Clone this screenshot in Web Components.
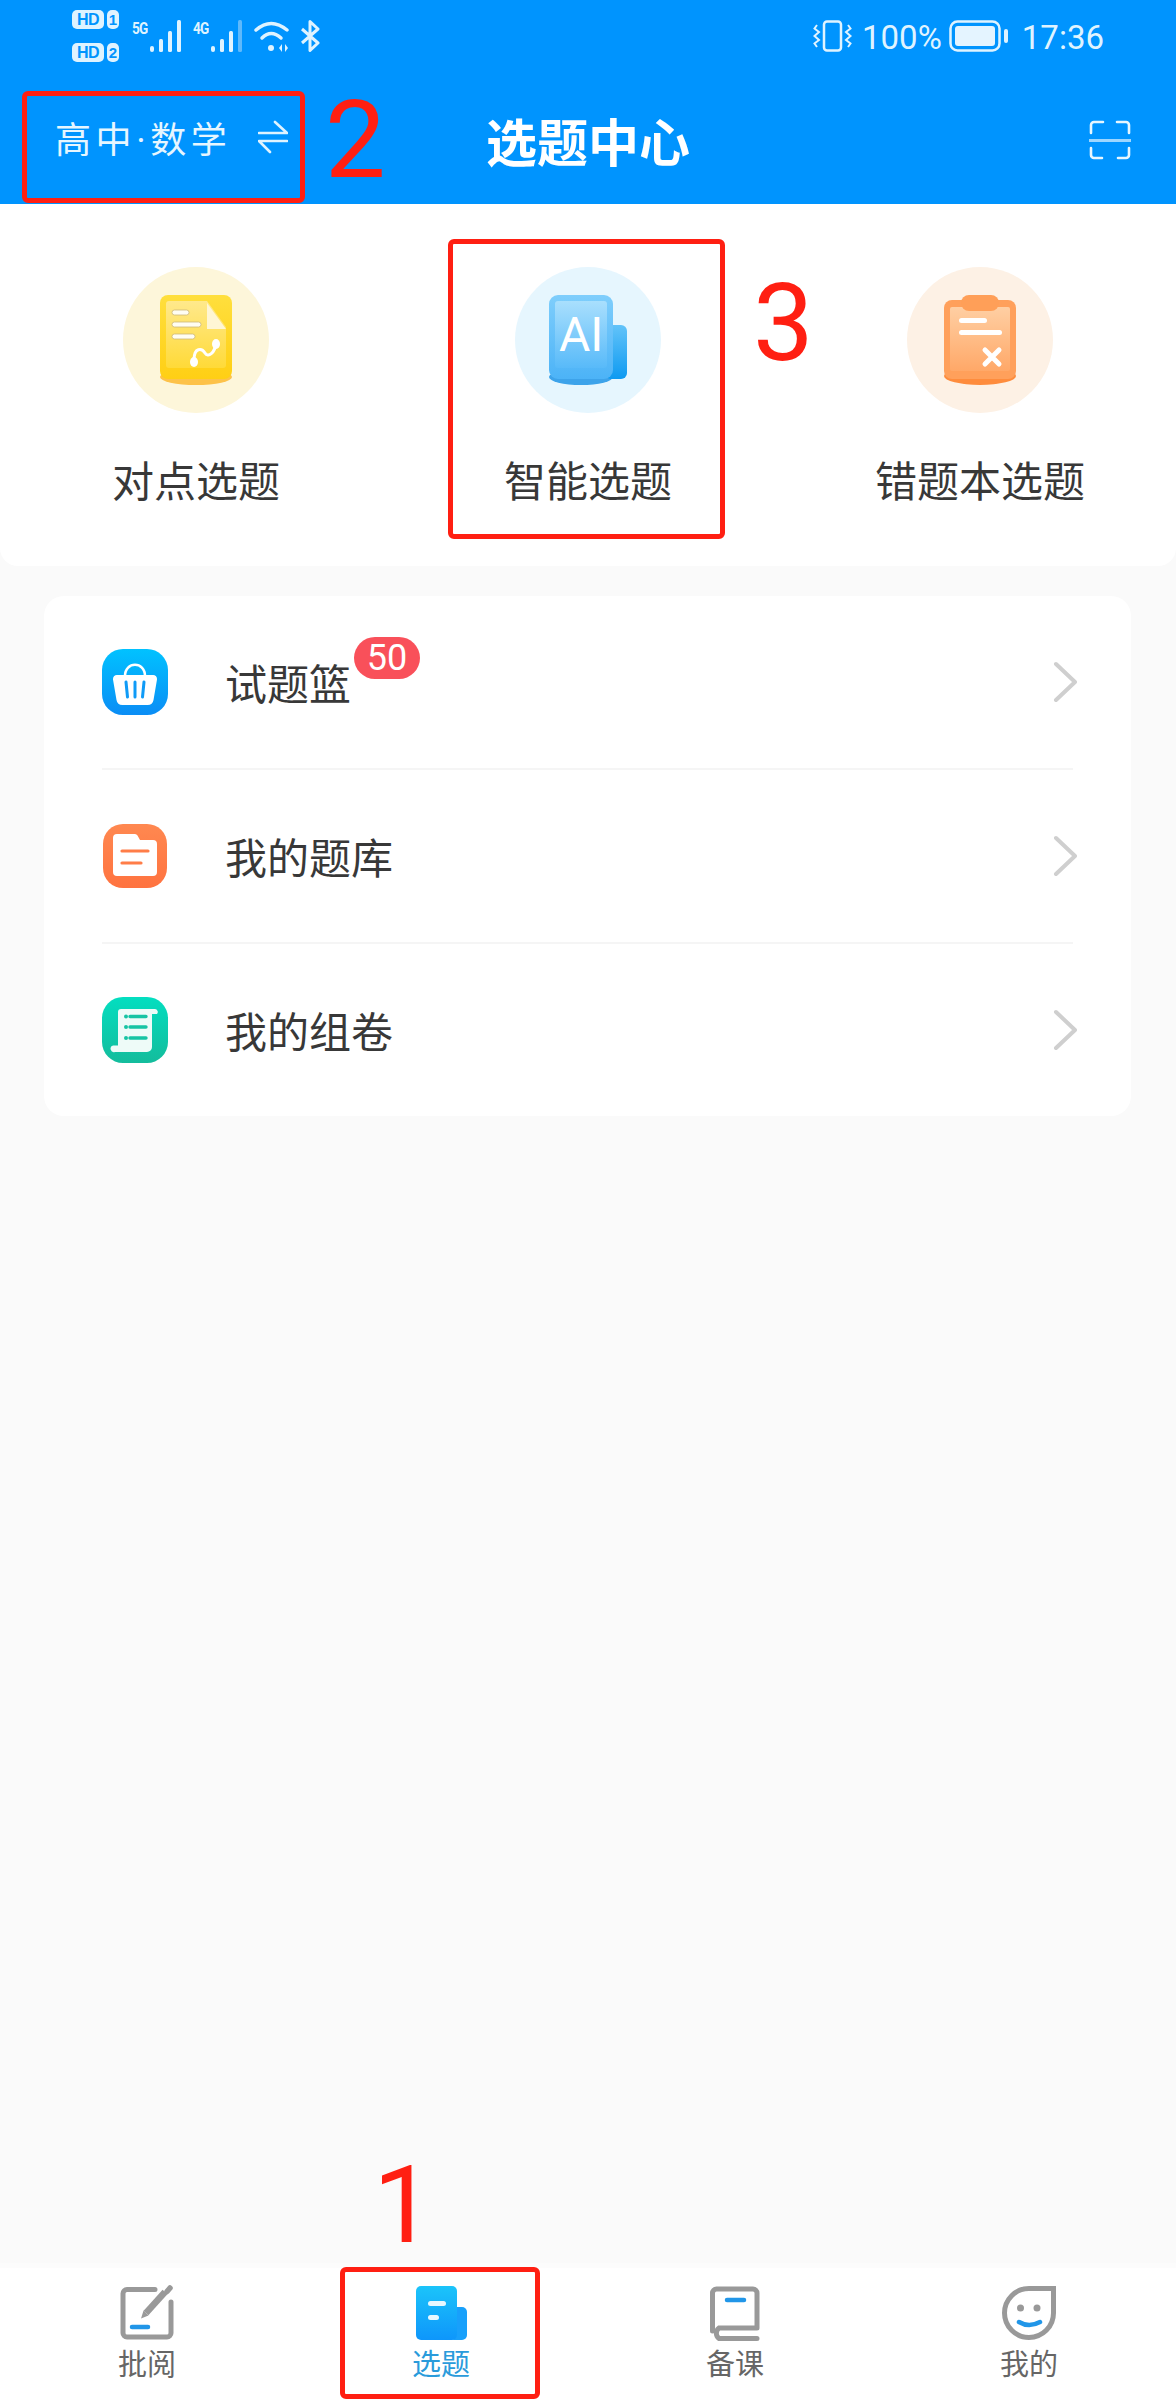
<!DOCTYPE html>
<html lang="zh">
<head>
<meta charset="utf-8">
<title>选题中心</title>
<style>
  html, body { margin: 0; padding: 0; background: #fafafa; }
  body { font-family: "Noto Sans CJK SC", "Noto Sans", sans-serif; }
</style>
</head>
<body>
<app-screen>
  <status-bar></status-bar>
  <top-nav subject="高中·数学" heading="选题中心"></top-nav>

  <entry-card>
    <entry-item label="对点选题" tint="#fdf6da">
      <svg slot="icon" width="72" height="90" viewBox="0 0 72 90">
        <defs>
          <linearGradient id="yo" x1="0" y1="0" x2="0" y2="1"><stop offset="0" stop-color="#ffdf3d"/><stop offset="1" stop-color="#ffcf14"/></linearGradient>
          <linearGradient id="yi" x1="0" y1="0" x2="0" y2="1"><stop offset="0" stop-color="#ffe98c"/><stop offset="1" stop-color="#ffda38"/></linearGradient>
        </defs>
        <ellipse cx="36" cy="82" rx="36" ry="8" fill="#fdc24a"/>
        <rect x="0" y="0" width="72" height="84" rx="8" fill="url(#yo)"/>
        <path d="M9 6H47L66 32V70a3 3 0 0 1-3 3H9a3 3 0 0 1-3-3V9a3 3 0 0 1 3-3z" fill="url(#yi)"/>
        <path d="M47 8L66 34H47z" fill="#fff6d4"/>
        <g fill="#fffdf2" stroke="#cdb87a" stroke-width=".8">
          <rect x="12" y="15" width="17" height="5" rx="2.5"/>
          <rect x="12" y="27" width="29" height="5" rx="2.5"/>
          <rect x="12" y="39" width="23" height="5" rx="2.5"/>
        </g>
        <path d="M34 65C34 52 42 53 45 58S55 58 56 48" fill="none" stroke="#fff" stroke-width="3"/>
        <ellipse cx="34" cy="67" rx="4" ry="5" fill="#fff"/>
        <ellipse cx="56" cy="49" rx="4" ry="5" fill="#fff"/>
      </svg>
    </entry-item>
    <entry-item label="智能选题" tint="#e6f6fe">
      <svg slot="icon" width="78" height="90" viewBox="0 0 78 90">
        <defs>
          <linearGradient id="bt" x1="0" y1="0" x2="0" y2="1"><stop offset="0" stop-color="#62c3f9"/><stop offset="1" stop-color="#0e9af1"/></linearGradient>
          <linearGradient id="bo" x1="0" y1="0" x2="0" y2="1"><stop offset="0" stop-color="#7fcefc"/><stop offset="1" stop-color="#4cb3f7"/></linearGradient>
          <linearGradient id="bi" x1="0" y1="0" x2="0" y2="1"><stop offset="0" stop-color="#a9dffd"/><stop offset="1" stop-color="#58baf9"/></linearGradient>
        </defs>
        <ellipse cx="32" cy="82" rx="32" ry="8" fill="#3da3ea"/>
        <rect x="56" y="30" width="22" height="54" rx="6" fill="url(#bt)"/>
        <rect x="0" y="0" width="64" height="84" rx="9" fill="url(#bo)"/>
        <rect x="6" y="6" width="52" height="67" rx="3" fill="url(#bi)"/>
        <text x="10" y="56" font-family="Roboto, sans-serif" font-size="48" font-weight="400" fill="#fff">AI</text>
      </svg>
    </entry-item>
    <entry-item label="错题本选题" tint="#fdf1e5">
      <svg slot="icon" width="72" height="90" viewBox="0 0 72 90">
        <defs>
          <linearGradient id="oi" x1="0" y1="0" x2="0" y2="1"><stop offset="0" stop-color="#ffcfa3"/><stop offset="1" stop-color="#ffa868"/></linearGradient>
        </defs>
        <ellipse cx="36" cy="81" rx="36" ry="9" fill="#fe8c3d"/>
        <rect x="0" y="5" width="72" height="79" rx="8" fill="#ffa05b"/>
        <rect x="6" y="12" width="60" height="64" rx="2" fill="url(#oi)"/>
        <rect x="17" y="0" width="38" height="16" rx="8" fill="#ff9f58"/>
        <rect x="15" y="23" width="28" height="5" rx="2.5" fill="#fff"/>
        <rect x="15" y="35" width="43" height="5" rx="2.5" fill="#fff"/>
        <path d="M41 55L55 69M55 55L41 69" stroke="#fff" stroke-width="5" stroke-linecap="round"/>
      </svg>
    </entry-item>
  </entry-card>

  <menu-card>
    <menu-row label="试题篮" badge="50">
      <svg slot="icon" width="66" height="66" viewBox="0 0 66 66">
        <defs><linearGradient id="m1" x1="0" y1="0" x2="0" y2="1"><stop offset="0" stop-color="#01c2ff"/><stop offset="1" stop-color="#0b8df5"/></linearGradient></defs>
        <rect width="66" height="66" rx="21" fill="url(#m1)"/>
        <path d="M23 27C23 12 43 12 43 27" fill="none" stroke="#fff" stroke-width="2.6"/>
        <path d="M15 26H51a4 4 0 0 1 4 4.500L51.500 51a6 6 0 0 1-6 5H20.500a6 6 0 0 1-6-5L11 30.500A4 4 0 0 1 15 26z" fill="#fff"/>
        <path d="M24 33L25.500 48M33 33V48M42 33L40.500 48" stroke="#0f9bf7" stroke-width="3" stroke-linecap="round"/>
      </svg>
    </menu-row>
    <menu-row label="我的题库">
      <svg slot="icon" width="64" height="64" viewBox="0 0 64 64">
        <defs><linearGradient id="m2" x1="0" y1="0" x2="0" y2="1"><stop offset="0" stop-color="#ff8850"/><stop offset="1" stop-color="#ff7340"/></linearGradient></defs>
        <rect width="64" height="64" rx="20" fill="url(#m2)"/>
        <path d="M14 10H32a3 3 0 0 1 2.500 1.500L37 16H50a4 4 0 0 1 4 4V48a4 4 0 0 1-4 4H14a4 4 0 0 1-4-4V14a4 4 0 0 1 4-4z" fill="#fff"/>
        <path d="M19 27H45M19 39H38" stroke="#ff7d48" stroke-width="3.200" stroke-linecap="round"/>
      </svg>
    </menu-row>
    <menu-row label="我的组卷" last>
      <svg slot="icon" width="66" height="66" viewBox="0 0 66 66">
        <defs><linearGradient id="m3" x1="0" y1="0" x2="0" y2="1"><stop offset="0" stop-color="#03dec0"/><stop offset="1" stop-color="#14bc9c"/></linearGradient></defs>
        <rect width="66" height="66" rx="21" fill="url(#m3)"/>
        <path d="M19 12H53a3 3 0 0 1 2 5H50V50a5 5 0 0 1-5 5H13a3 3 0 0 1-2-6.500H16V15a3 3 0 0 1 3-3z" fill="#eefbf8"/>
        <path d="M28 19.500H44M28 30H44M28 41H44" stroke="#17c4a4" stroke-width="3.400" stroke-linecap="round"/>
        <circle cx="24" cy="19.500" r="2" fill="#17c4a4"/><circle cx="24" cy="30" r="2" fill="#17c4a4"/><circle cx="24" cy="41" r="2" fill="#17c4a4"/>
      </svg>
    </menu-row>
  </menu-card>

  <tab-bar>
    <tab-item label="批阅">
      <svg slot="icon" width="56" height="56" viewBox="0 0 56 56" fill="none">
        <path d="M36 4.500H8a4 4 0 0 0-4 4V48a4 4 0 0 0 4 4H48a4 4 0 0 0 4-4V17" stroke="#999" stroke-width="5" stroke-linecap="round"/>
        <path d="M27 28L46 7" stroke="#999" stroke-width="6.500"/>
        <path d="M48 6.500L51 3" stroke="#999" stroke-width="5.500" stroke-linecap="round"/>
        <path d="M24.500 25.500L29.500 30.500L22 33.500z" fill="#999"/>
        <path d="M13 42H29" stroke="#2196e8" stroke-width="4.500" stroke-linecap="round"/>
      </svg>
    </tab-item>
    <tab-item label="选题" active>
      <svg slot="icon" width="56" height="56" viewBox="0 0 56 56">
        <defs><linearGradient id="t1" x1="0" y1="0" x2="0" y2="1"><stop offset="0" stop-color="#1bc4fa"/><stop offset="1" stop-color="#0e96fb"/></linearGradient></defs>
        <rect x="36" y="22" width="18" height="33" rx="5" fill="#18a0fb"/>
        <rect x="3" y="1" width="41" height="54" rx="5" fill="url(#t1)"/>
        <rect x="15" y="16" width="18" height="5" rx="2.500" fill="#e8f8ff"/>
        <rect x="15" y="30" width="11" height="5" rx="2.500" fill="#e8f8ff"/>
      </svg>
    </tab-item>
    <tab-item label="备课">
      <svg slot="icon" width="56" height="56" viewBox="0 0 56 56" fill="none">
        <path d="M50 43H12a6.500 6.500 0 0 0 0 10.500H50M50 43V8a4 4 0 0 0-4-4H9.500a4 4 0 0 0-4 4V46" stroke="#999" stroke-width="5" stroke-linecap="round"/>
        <path d="M20 15H37" stroke="#2196e8" stroke-width="4.500" stroke-linecap="round"/>
      </svg>
    </tab-item>
    <tab-item label="我的">
      <svg slot="icon" width="56" height="56" viewBox="0 0 56 56" fill="none">
        <path d="M52.500 3.500H28A24.500 24.500 0 1 0 52.500 28z" stroke="#999" stroke-width="5"/>
        <circle cx="19.500" cy="23" r="3.500" fill="#999"/><circle cx="36" cy="23" r="3.500" fill="#999"/>
        <path d="M18 37Q28 43 39 37" stroke="#2196e8" stroke-width="4.500" stroke-linecap="round"/>
      </svg>
    </tab-item>
  </tab-bar>

  <!-- red annotations drawn over the screenshot -->
  <red-mark style="left:22px;top:91px;width:283px;height:112px"></red-mark>
  <red-mark style="left:448px;top:239px;width:277px;height:300px"></red-mark>
  <red-mark style="left:340px;top:2267px;width:200px;height:132px"></red-mark>
  <red-num style="left:325px;top:86px">2</red-num>
  <red-num style="left:753px;top:269px">3</red-num>
  <red-num style="left:373px;top:2151px">1</red-num>
</app-screen>

<script>
"use strict";

class AppScreen extends HTMLElement {
    constructor() {
        super();
        this.attachShadow({ mode: 'open' }).innerHTML = `
        <style>
          :host {
              display: flex;
              flex-direction: column;
              position: relative;
              width: 1176px;
              height: 2400px;
              overflow: hidden;
              background: #fafafa;
          }
        </style>
        <slot></slot>`;
    }
}

class StatusBar extends HTMLElement {
    constructor() {
        super();
        const bars = (last) => `
            <svg width="33" height="32" viewBox="0 0 33 32" fill="#dff3ff">
              <rect x="1" y="26" width="4" height="6" rx="2"/>
              <rect x="10" y="19" width="4" height="13" rx="1.500"/>
              <rect x="19" y="11" width="4" height="21" rx="1.500"/>
              <rect x="28" y="0" width="4" height="32" rx="1.500" fill="${last}"/>
            </svg>`;
        this.attachShadow({ mode: 'open' }).innerHTML = `
        <style>
          :host {
              display: flex;
              justify-content: space-between;
              height: 84px;
              box-sizing: border-box;
              padding: 10px 72px 0 72px;
              background: #0094fe;
              color: #dff3ff;
              font-family: Roboto, sans-serif;
          }
          .side { display: flex; align-items: flex-start; }
          svg { display: block; margin-top: 10px; }
          .hd { display: flex; flex-direction: column; gap: 14px; margin-right: 13px; }
          .hd div { display: flex; gap: 3px; }
          .hd span {
              height: 19px;
              width: 32px;
              border-radius: 5px;
              background: #dff3ff;
              color: #0094fe;
              font: bold 16px/19px "Liberation Sans", sans-serif;
              letter-spacing: -.5px;
              text-align: center;
          }
          .hd span + span { width: 12px; letter-spacing: 0; font-size: 15px; }
          .net { display: flex; align-items: flex-start; margin-right: 11px; }
          .net b {
              display: block;
              width: 17px;
              margin-top: 10px;
              font: bold 17px/17px Roboto, sans-serif;
              letter-spacing: -1px;
              transform: scaleX(.8);
              transform-origin: left;
          }
          .txt { font-size: 33px; line-height: 38px; margin-top: 9px; }
        </style>
        <div class="side">
          <div class="hd">
            <div><span>HD</span><span>1</span></div>
            <div><span>HD</span><span>2</span></div>
          </div>
          <div class="net"><b>5G</b>${bars('#dff3ff')}</div>
          <div class="net"><b>4G</b>${bars('#5fb9fb')}</div>
          <svg width="36" height="32" viewBox="0 0 36 32" fill="none" stroke="#dff3ff" stroke-linecap="round" style="margin-right:10px">
            <path d="M2 10Q17 -3 33 10" stroke-width="3.500"/>
            <path d="M8 18Q17 9 27 18" stroke-width="3.500"/>
            <circle cx="17" cy="28" r="3" fill="#dff3ff" stroke="none"/>
            <path d="M28 24L25 28L28 32zM31 24L34 28L31 32z" fill="#dff3ff" stroke="none"/>
          </svg>
          <svg width="20" height="32" viewBox="0 0 20 32" fill="none" stroke="#dff3ff" stroke-width="3" stroke-linejoin="round">
            <path d="M2 9L18 23L10 30.500V1.500L18 9L2 23"/>
          </svg>
        </div>
        <div class="side">
          <svg width="39" height="32" viewBox="0 0 39 32" fill="none" stroke="#dff3ff" stroke-width="2.500" style="margin-right:10px">
            <rect x="11" y="1.500" width="17" height="29" rx="3"/>
            <path d="M4 5L1.500 8.500L6 12L1.500 16L6 20L1.500 23.500L4 27M35 5L37.500 8.500L33 12L37.500 16L33 20L37.500 23.500L35 27" stroke-width="2"/>
          </svg>
          <div class="txt">100%</div>
          <svg width="59" height="32" viewBox="0 0 59 32" style="margin-left:7px;margin-right:14px">
            <rect x="1.500" y="1.500" width="49" height="29" rx="7" fill="none" stroke="#dff3ff" stroke-width="2.500"/>
            <rect x="6" y="6" width="40" height="20" rx="3" fill="#e4f4ff"/>
            <rect x="55" y="9" width="4" height="14" rx="2" fill="#dff3ff"/>
          </svg>
          <div class="txt">17:36</div>
        </div>`;
    }
}

class TopNav extends HTMLElement {
    constructor() {
        super();
        this.attachShadow({ mode: 'open' }).innerHTML = `
        <style>
          :host {
              display: grid;
              grid-template-columns: 1fr auto 1fr;
              align-items: center;
              height: 120px;
              box-sizing: border-box;
              padding: 0 45px 8px 45px;
              background: #0094fe;
              color: #fff;
          }
          .subject {
              display: flex;
              align-items: center;
              gap: 27px;
              margin: 0 0 6px 10px;
              font-family: Roboto, "Noto Sans CJK SC", sans-serif;
              font-size: 36px;
              letter-spacing: 4.6px;
              color: #e6f6ff;
          }
          h1 { margin: 0; font-size: 51px; line-height: 60px; font-weight: 700; }
          .scan { justify-self: end; display: block; }
          svg { display: block; }
        </style>
        <div class="subject">
          <span>${this.getAttribute('subject')}</span>
          <svg width="30" height="34" viewBox="0 0 30 34" fill="none" stroke="#dff3ff" stroke-width="2.600" stroke-linecap="round" stroke-linejoin="round">
            <path d="M1 13H29L17 2M29 21H1L12 32"/>
          </svg>
        </div>
        <h1>${this.getAttribute('heading')}</h1>
        <svg class="scan" width="42" height="40" viewBox="0 0 42 40" fill="none" stroke="#e6f6ff" stroke-width="2.600" stroke-linecap="round">
          <path d="M2 13V5a3 3 0 0 1 3-3H14M28 2H37a3 3 0 0 1 3 3V13M2 28V35a3 3 0 0 0 3 3H13M29 38H37a3 3 0 0 0 3-3V28"/>
          <path d="M0 20.500H42" stroke="#9dd6ff" stroke-width="3"/>
        </svg>`;
    }
}

class EntryCard extends HTMLElement {
    constructor() {
        super();
        this.attachShadow({ mode: 'open' }).innerHTML = `
        <style>
          :host {
              display: grid;
              grid-template-columns: repeat(3, 392px);
              height: 362px;
              box-sizing: border-box;
              padding-top: 63px;
              background: #fff;
              border-radius: 0 0 18px 18px;
          }
        </style>
        <slot></slot>`;
    }
}

class EntryItem extends HTMLElement {
    constructor() {
        super();
        this.attachShadow({ mode: 'open' }).innerHTML = `
        <style>
          :host { display: flex; flex-direction: column; align-items: center; }
          .disc {
              display: flex;
              align-items: center;
              justify-content: center;
              width: 146px;
              height: 146px;
              border-radius: 50%;
              background: ${this.getAttribute('tint')};
          }
          ::slotted(svg) { display: block; }
          .label { margin-top: 41px; font-size: 42px; line-height: 50px; color: #383838; }
        </style>
        <div class="disc"><slot name="icon"></slot></div>
        <div class="label">${this.getAttribute('label')}</div>`;
    }
}

class MenuCard extends HTMLElement {
    constructor() {
        super();
        this.attachShadow({ mode: 'open' }).innerHTML = `
        <style>
          :host {
              display: block;
              margin: 30px 45px 0 44px;
              background: #fff;
              border-radius: 20px;
          }
        </style>
        <slot></slot>`;
    }
}

class MenuRow extends HTMLElement {
    constructor() {
        super();
        const badge = this.getAttribute('badge');
        const last = this.hasAttribute('last');
        this.attachShadow({ mode: 'open' }).innerHTML = `
        <style>
          :host { display: block; padding: 0 58px; }
          .row {
              display: flex;
              align-items: center;
              height: 172px;
              border-bottom: ${last ? 0 : 2}px solid #f5f5f5;
          }
          .icon { display: flex; justify-content: center; width: 66px; flex: none; }
          ::slotted(svg) { display: block; }
          .label { position: relative; margin-left: 57px; font-size: 42px; line-height: 50px; color: #383838; flex: 1; }
          .badge {
              position: absolute;
              left: 129px;
              top: -20px;
              width: 66px;
              height: 42px;
              border-radius: 21px;
              background: #f9505a;
              color: #fff;
              font: 36px/42px Roboto, sans-serif;
              text-align: center;
          }
          .chev { display: block; margin-right: -4px; }
        </style>
        <div class="row">
          <div class="icon"><slot name="icon"></slot></div>
          <div class="label">${this.getAttribute('label')}${badge ? `<span class="badge">${badge}</span>` : ''}</div>
          <svg class="chev" width="24" height="42" viewBox="0 0 24 42" fill="none" stroke="#cfcfcf" stroke-width="4" stroke-linecap="round" stroke-linejoin="round">
            <path d="M3 3L22 21L3 39"/>
          </svg>
        </div>`;
    }
}

class TabBar extends HTMLElement {
    constructor() {
        super();
        this.attachShadow({ mode: 'open' }).innerHTML = `
        <style>
          :host {
              display: grid;
              grid-template-columns: repeat(4, 294px);
              box-sizing: border-box;
              height: 137px;
              margin-top: auto;
              padding-top: 17px;
              border-top: 5px solid #fcfcfc;
              background: #fff;
          }
        </style>
        <slot></slot>`;
    }
}

class TabItem extends HTMLElement {
    constructor() {
        super();
        this.attachShadow({ mode: 'open' }).innerHTML = `
        <style>
          :host { display: flex; flex-direction: column; align-items: center; }
          ::slotted(svg) { display: block; }
          .label {
              margin-top: 2px;
              font-size: 29px;
              line-height: 38px;
              color: ${this.hasAttribute('active') ? '#2a9bdb' : '#666'};
          }
        </style>
        <slot name="icon"></slot>
        <div class="label">${this.getAttribute('label')}</div>`;
    }
}

class RedMark extends HTMLElement {
    constructor() {
        super();
        this.attachShadow({ mode: 'open' }).innerHTML = `
        <style>
          :host {
              position: absolute;
              box-sizing: border-box;
              border: 5px solid #ff1f12;
              border-radius: 6px;
          }
        </style>`;
    }
}

class RedNum extends HTMLElement {
    constructor() {
        super();
        this.attachShadow({ mode: 'open' }).innerHTML = `
        <style>
          :host {
              position: absolute;
              font: 108px/108px Roboto, sans-serif;
              color: #ff1f12;
          }
        </style>
        <slot></slot>`;
    }
}

customElements.define('app-screen', AppScreen);
customElements.define('status-bar', StatusBar);
customElements.define('top-nav', TopNav);
customElements.define('entry-card', EntryCard);
customElements.define('entry-item', EntryItem);
customElements.define('menu-card', MenuCard);
customElements.define('menu-row', MenuRow);
customElements.define('tab-bar', TabBar);
customElements.define('tab-item', TabItem);
customElements.define('red-mark', RedMark);
customElements.define('red-num', RedNum);
</script>
</body>
</html>
